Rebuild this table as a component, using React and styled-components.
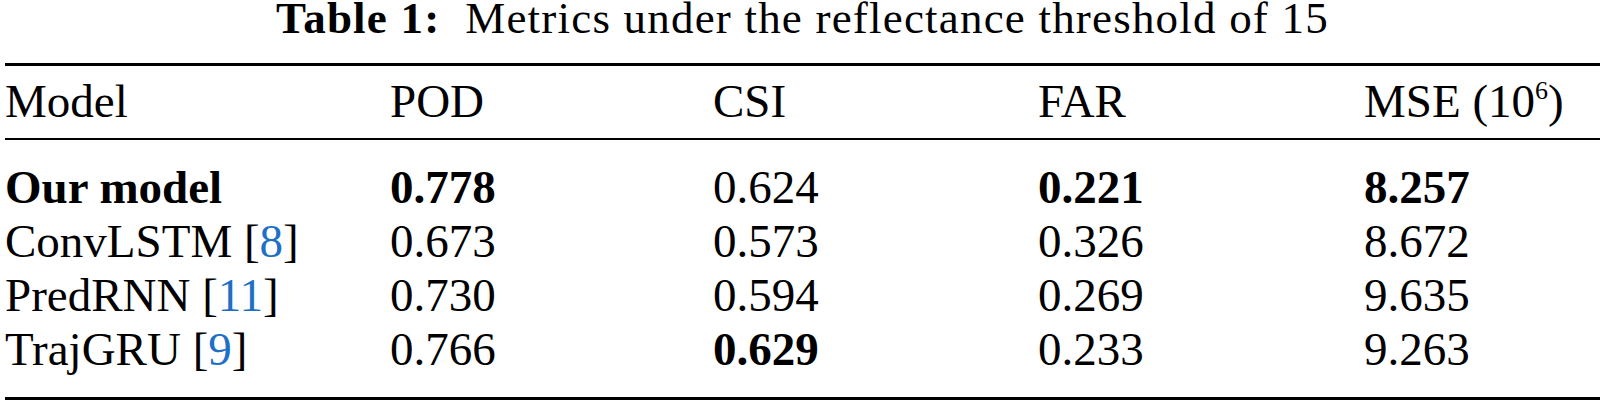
import React from "react";
import styled, { createGlobalStyle } from "styled-components";

const rows = [
  { model: "Our model", pod: "0.778", csi: "0.624", far: "0.221", mse: "8.257", best: ["model", "pod", "far", "mse"] },
  { model: "ConvLSTM", cite: "8", pod: "0.673", csi: "0.573", far: "0.326", mse: "8.672", best: [] },
  { model: "PredRNN", cite: "11", pod: "0.730", csi: "0.594", far: "0.269", mse: "9.635", best: [] },
  { model: "TrajGRU", cite: "9", pod: "0.766", csi: "0.629", far: "0.233", mse: "9.263", best: ["csi"] },
];

const App = () => {
  return (
    <>
      <GlobalStyle />
      <Wrapper>
        <Caption>
          <CaptionLabel>Table 1:</CaptionLabel>
          {"  "}Metrics under the reflectance threshold of 15
        </Caption>
        <Table>
          <HeadRow>
            <Cell>Model</Cell>
            <Cell>POD</Cell>
            <Cell>CSI</Cell>
            <Cell>FAR</Cell>
            <Cell>
              MSE (10<Sup>6</Sup>)
            </Cell>
          </HeadRow>
          <Body>
            {rows.map((r) => (
              <Row key={r.model}>
                <Cell $bold={r.best.includes("model")}>
                  {r.model}
                  {r.cite && (
                    <>
                      {" "}[<Cite>{r.cite}</Cite>]
                    </>
                  )}
                </Cell>
                <Cell $bold={r.best.includes("pod")}>{r.pod}</Cell>
                <Cell $bold={r.best.includes("csi")}>{r.csi}</Cell>
                <Cell $bold={r.best.includes("far")}>{r.far}</Cell>
                <Cell $bold={r.best.includes("mse")}>{r.mse}</Cell>
              </Row>
            ))}
          </Body>
        </Table>
      </Wrapper>
    </>
  );
};

const GlobalStyle = createGlobalStyle`
  body {
    margin: 0;
    background: #ffffff;
  }
`;

const Wrapper = styled.div`
  width: 1604px;
  height: 404px;
  padding: 0 4px 0 5px;
  box-sizing: border-box;
  font-family: "Liberation Serif", "Times New Roman", serif;
  color: #000;
  overflow: hidden;
`;

const Caption = styled.div`
  font-size: 45px;
  line-height: 36px;
  letter-spacing: 1.2px;
  text-align: center;
  white-space: pre;
  height: 63px;
`;

const CaptionLabel = styled.span`
  font-weight: 700;
`;

const Table = styled.div`
  border-top: 3px solid #000;
  border-bottom: 3px solid #000;
`;

const cols = "385px 323px 325px 326px 1fr";

const HeadRow = styled.div`
  display: grid;
  grid-template-columns: ${cols};
  padding: 8px 0 10px;
  border-bottom: 2px solid #000;
`;

const Body = styled.div`
  padding: 20px 0 21px;
`;

const Row = styled.div`
  display: grid;
  grid-template-columns: ${cols};
`;

const Cell = styled.div`
  font-size: 47px;
  line-height: 54px;
  white-space: nowrap;
  font-weight: ${(p) => (p.$bold ? 700 : 400)};
`;

const Sup = styled.sup`
  font-size: 26px;
  line-height: 0;
  vertical-align: 18px;
`;

const Cite = styled.span`
  color: #1e6fc6;
`;

export default App;
